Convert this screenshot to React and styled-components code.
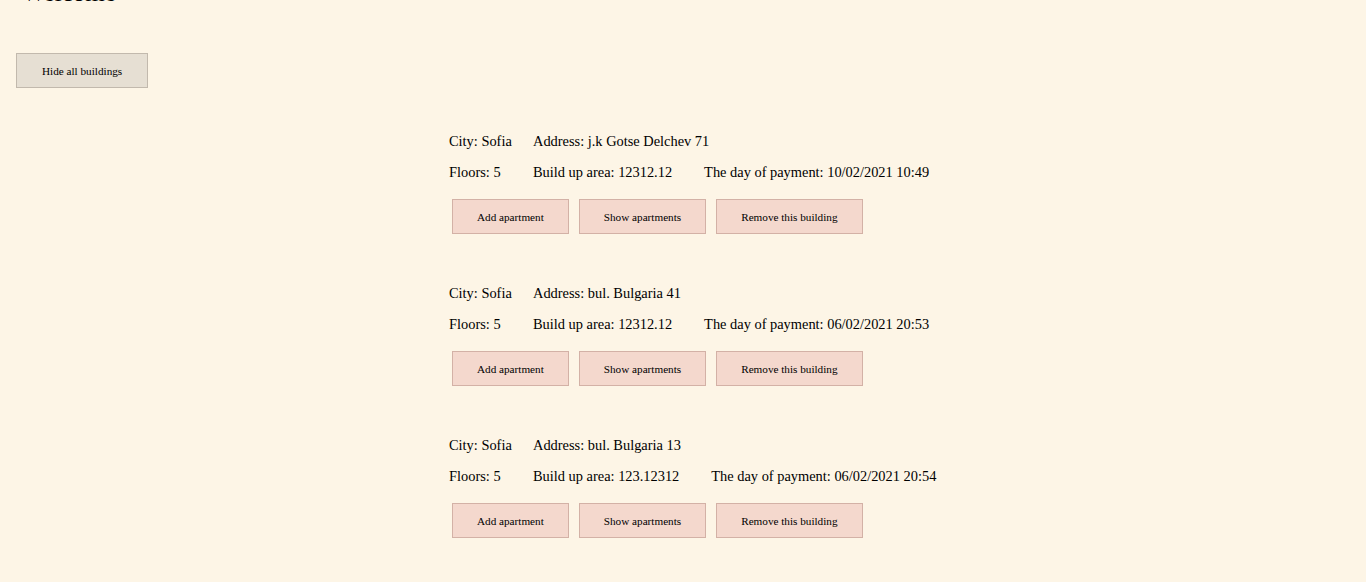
import React from 'react';
import styled, { createGlobalStyle } from 'styled-components';

const GlobalStyle = createGlobalStyle`
  html, body {
    margin: 0;
    background: #fdf5e6;
    font-family: "Liberation Serif", "Times New Roman", serif;
    color: #000;
  }
`;

const Page = styled.div`
  padding: 0 16px 40px;
`;

const Title = styled.h1`
  margin: -21px 0 0 6px;
  font-size: 25px;
  font-weight: normal;
  line-height: 28px;
`;

const HideButton = styled.button`
  margin-top: 46px;
  height: 35px;
  padding: 0 25px;
  background: #e6dfd3;
  border: 1px solid #c2b9ad;
  font-family: inherit;
  font-size: 11.2px;
  color: #000;
  cursor: pointer;
`;

const List = styled.div`
  display: flex;
  flex-direction: column;
  gap: 51px;
  margin-top: 45px;
  padding-left: 433px;
`;

const Building = styled.div`
  display: flex;
  flex-direction: column;
`;

const Row = styled.div`
  display: flex;
  height: 16px;
  line-height: 16px;
  font-size: 14.4px;
  white-space: nowrap;
  margin-bottom: ${(p) => p.$space}px;
`;

const Label = styled.span`
  width: 84px;
  flex-shrink: 0;
`;

const Field = styled.span`
  margin-right: 32px;
`;

const Actions = styled.div`
  display: flex;
  gap: 10px;
  margin-left: 3px;
`;

const ActionButton = styled.button`
  height: 35px;
  padding: 0 24px;
  background: #f4d8cd;
  border: 1px solid #d3b1a6;
  font-family: inherit;
  font-size: 11.2px;
  color: #000;
  cursor: pointer;
`;

const buildings = [
  { city: 'Sofia', address: 'j.k Gotse Delchev 71', floors: 5, area: '12312.12', paid: '10/02/2021 10:49' },
  { city: 'Sofia', address: 'bul. Bulgaria 41', floors: 5, area: '12312.12', paid: '06/02/2021 20:53' },
  { city: 'Sofia', address: 'bul. Bulgaria 13', floors: 5, area: '123.12312', paid: '06/02/2021 20:54' },
];

const App = () => {
  return (
    <Page>
      <GlobalStyle />
      <Title>Welcome</Title>
      <HideButton>Hide all buildings</HideButton>

      <List>
        {buildings.map((b, i) => (
          <Building key={i}>
            <Row $space={15}>
              <Label>City: {b.city}</Label>
              <Field>Address: {b.address}</Field>
            </Row>
            <Row $space={19}>
              <Label>Floors: {b.floors}</Label>
              <Field>Build up area: {b.area}</Field>
              <Field>The day of payment: {b.paid}</Field>
            </Row>
            <Actions>
              <ActionButton>Add apartment</ActionButton>
              <ActionButton>Show apartments</ActionButton>
              <ActionButton>Remove this building</ActionButton>
            </Actions>
          </Building>
        ))}
      </List>
    </Page>
  );
};

export default App;
